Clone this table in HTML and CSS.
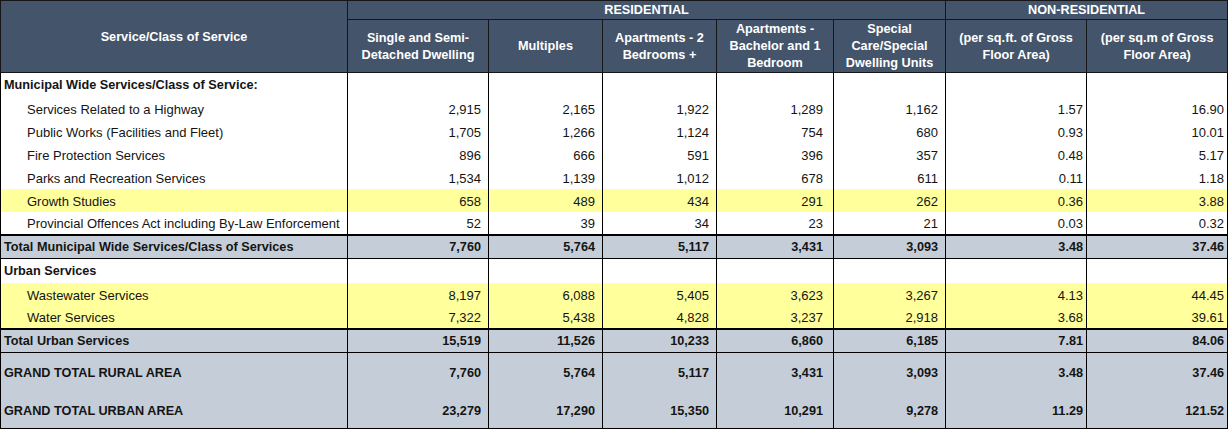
FILE: index.html
```html
<!DOCTYPE html>
<html lang="en">
<head>
<meta charset="utf-8">
<title>Development Charges</title>
<link rel="stylesheet" href="styles.css">
</head>
<body>
<table class="dc">
  <colgroup>
    <col class="c-name">
    <col class="c-sd">
    <col class="c-mu">
    <col class="c-a2">
    <col class="c-ab">
    <col class="c-sc">
    <col class="c-ft">
    <col class="c-m2">
  </colgroup>
  <thead>
    <tr class="h1">
      <th rowspan="2" class="h-name">Service/Class of Service</th>
      <th colspan="5">RESIDENTIAL</th>
      <th colspan="2">NON-RESIDENTIAL</th>
    </tr>
    <tr class="h2">
      <th>Single and Semi-<br>Detached Dwelling</th>
      <th>Multiples</th>
      <th>Apartments - 2<br>Bedrooms +</th>
      <th>Apartments -<br>Bachelor and 1<br>Bedroom</th>
      <th>Special<br>Care/Special<br>Dwelling Units</th>
      <th>(per sq.ft. of Gross<br>Floor Area)</th>
      <th>(per sq.m of Gross<br>Floor Area)</th>
    </tr>
  </thead>
  <tbody>
    <tr class="sec">
      <td class="lbl">Municipal Wide Services/Class of Service:</td>
      <td></td><td></td><td></td><td></td><td></td><td></td><td></td>
    </tr>
    <tr class="row">
      <td class="lbl ind">Services Related to a Highway</td>
      <td class="num">2,915</td><td class="num">2,165</td><td class="num">1,922</td><td class="num p5">1,289</td><td class="num">1,162</td><td class="num nr">1.57</td><td class="num nr">16.90</td>
    </tr>
    <tr class="row">
      <td class="lbl ind">Public Works (Facilities and Fleet)</td>
      <td class="num">1,705</td><td class="num">1,266</td><td class="num">1,124</td><td class="num p5">754</td><td class="num">680</td><td class="num nr">0.93</td><td class="num nr">10.01</td>
    </tr>
    <tr class="row">
      <td class="lbl ind">Fire Protection Services</td>
      <td class="num">896</td><td class="num">666</td><td class="num">591</td><td class="num p5">396</td><td class="num">357</td><td class="num nr">0.48</td><td class="num nr">5.17</td>
    </tr>
    <tr class="row">
      <td class="lbl ind">Parks and Recreation Services</td>
      <td class="num">1,534</td><td class="num">1,139</td><td class="num">1,012</td><td class="num p5">678</td><td class="num">611</td><td class="num nr">0.11</td><td class="num nr">1.18</td>
    </tr>
    <tr class="row hl">
      <td class="lbl ind">Growth Studies</td>
      <td class="num">658</td><td class="num">489</td><td class="num">434</td><td class="num p5">291</td><td class="num">262</td><td class="num nr">0.36</td><td class="num nr">3.88</td>
    </tr>
    <tr class="row">
      <td class="lbl ind">Provincial Offences Act including By-Law Enforcement</td>
      <td class="num">52</td><td class="num">39</td><td class="num">34</td><td class="num p5">23</td><td class="num">21</td><td class="num nr">0.03</td><td class="num nr">0.32</td>
    </tr>
    <tr class="tot">
      <td class="lbl">Total Municipal Wide Services/Class of Services</td>
      <td class="num">7,760</td><td class="num">5,764</td><td class="num">5,117</td><td class="num p5">3,431</td><td class="num">3,093</td><td class="num nr">3.48</td><td class="num nr">37.46</td>
    </tr>
    <tr class="sec">
      <td class="lbl">Urban Services</td>
      <td></td><td></td><td></td><td></td><td></td><td></td><td></td>
    </tr>
    <tr class="row hl">
      <td class="lbl ind">Wastewater Services</td>
      <td class="num">8,197</td><td class="num">6,088</td><td class="num">5,405</td><td class="num p5">3,623</td><td class="num">3,267</td><td class="num nr">4.13</td><td class="num nr">44.45</td>
    </tr>
    <tr class="row hl">
      <td class="lbl ind">Water Services</td>
      <td class="num">7,322</td><td class="num">5,438</td><td class="num">4,828</td><td class="num p5">3,237</td><td class="num">2,918</td><td class="num nr">3.68</td><td class="num nr">39.61</td>
    </tr>
    <tr class="tot">
      <td class="lbl">Total Urban Services</td>
      <td class="num">15,519</td><td class="num">11,526</td><td class="num">10,233</td><td class="num p5">6,860</td><td class="num">6,185</td><td class="num nr">7.81</td><td class="num nr">84.06</td>
    </tr>
    <tr class="grand">
      <td class="lbl">GRAND TOTAL RURAL AREA</td>
      <td class="num">7,760</td><td class="num">5,764</td><td class="num">5,117</td><td class="num p5">3,431</td><td class="num">3,093</td><td class="num nr">3.48</td><td class="num nr">37.46</td>
    </tr>
    <tr class="grand last">
      <td class="lbl">GRAND TOTAL URBAN AREA</td>
      <td class="num">23,279</td><td class="num">17,290</td><td class="num">15,350</td><td class="num p5">10,291</td><td class="num">9,278</td><td class="num nr">11.29</td><td class="num nr">121.52</td>
    </tr>
  </tbody>
</table>
</body>
</html>
```

FILE: styles.css
```css
html, body {
  margin: 0;
  padding: 0;
  background: #ffffff;
}

.dc {
  border-collapse: collapse;
  table-layout: fixed;
  width: 1227px;
  font-family: "Liberation Sans", Arial, sans-serif;
  font-size: 13px;
  color: #141414;
}

.c-name { width: 347px; }
.c-sd { width: 141px; }
.c-mu { width: 114px; }
.c-a2 { width: 114px; }
.c-ab { width: 117px; }
.c-sc { width: 112px; }
.c-ft { width: 141px; }
.c-m2 { width: 141px; }

.dc th {
  background: #44546a;
  color: #ffffff;
  font-weight: bold;
  font-size: 12.7px;
  border: 1px solid #161616;
  text-align: center;
  vertical-align: middle;
  padding: 1px 2px 0;
  line-height: 17px;
}

.h1 { height: 19px; }
.h2 { height: 53px; }

.dc td {
  border-left: 1px solid #000000;
  border-right: 1px solid #000000;
  padding: 2px 7px 0 3px;
  vertical-align: middle;
  white-space: nowrap;
  line-height: 15px;
}

.dc td.ind { padding-left: 26px; }
.dc td.num { text-align: right; }
.dc td.p5 { padding-right: 10px; }
.dc td.nr { padding-right: 3px; }

.sec { height: 24px; }
.sec td.lbl { font-weight: bold; font-size: 12.7px; }

.row { height: 23px; }
.hl td { background: #ffff9c; }

.tot { height: 24px; }
.tot td {
  background: #c5ced8;
  font-weight: bold;
  font-size: 12.7px;
  border-top: 2px solid #000000;
  border-bottom: 1px solid #000000;
}

.grand { height: 38px; }
.grand td {
  background: #c5ced8;
  font-weight: bold;
  font-size: 12.7px;
  padding-top: 4px;
}
.grand.last td { border-bottom: 1px solid #000000; }
```
